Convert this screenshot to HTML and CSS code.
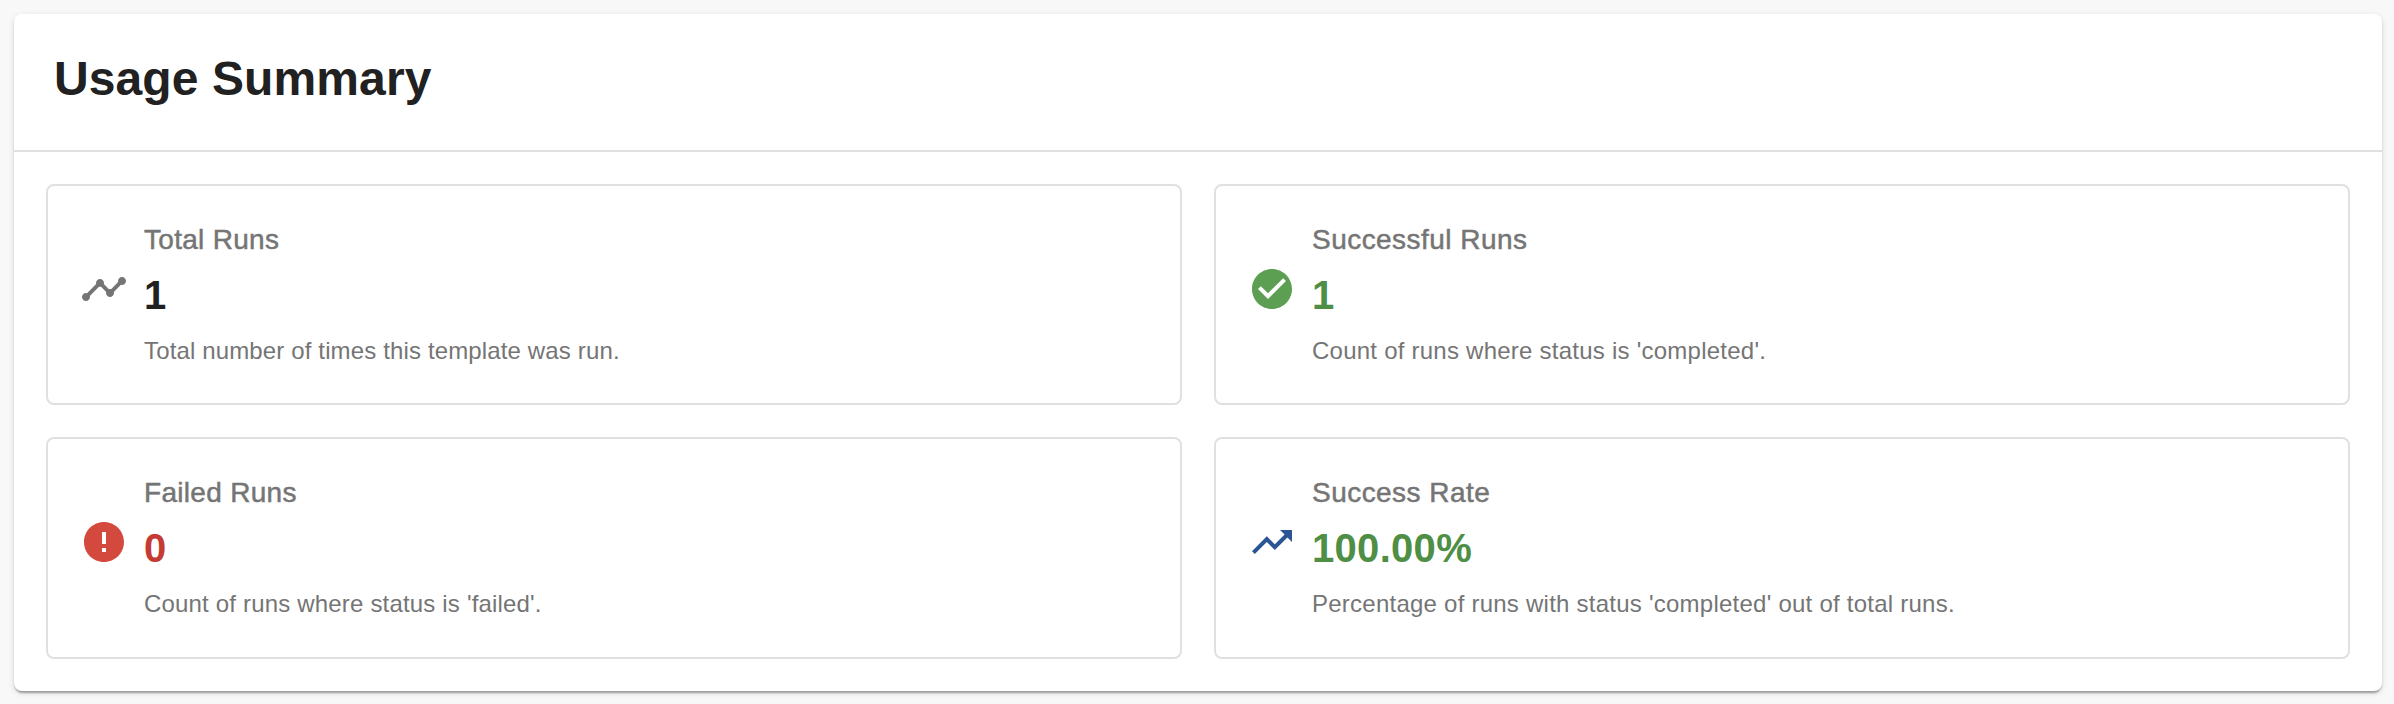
FILE: index.html
```html
<!DOCTYPE html>
<html lang="en">
<head>
<meta charset="utf-8">
<title>Usage Summary</title>
<link rel="stylesheet" href="styles.css">
</head>
<body>
<section class="panel">
  <header class="panel-header"><h1 class="panel-title">Usage Summary</h1></header>
  <div class="stats">
    <article class="stat stat-total">
      <svg class="icon icon-neutral" viewBox="0 0 24 24"><path d="M23 8c0 1.100-.9 2-2 2-.18 0-.35-.02-.51-.07l-3.560 3.550c.05.160.070.340.070.520 0 1.100-.9 2-2 2s-2-.9-2-2c0-.18.020-.36.070-.52l-2.550-2.550c-.16.050-.34.070-.52.070s-.36-.02-.52-.07l-4.550 4.560c.05.160.070.330.070.510 0 1.100-.9 2-2 2s-2-.9-2-2 .9-2 2-2c.18 0 .35.020.51.070l4.560-4.550C8.020 9.360 8 9.180 8 9c0-1.100.9-2 2-2s2 .9 2 2c0 .18-.02.360-.07.520l2.550 2.550c.16-.05.340-.07.520-.07s.36.020.52.070l3.550-3.560C19.020 8.350 19 8.180 19 8c0-1.100.9-2 2-2s2 .9 2 2z"/></svg>
      <div class="stat-body">
        <h2 class="stat-label">Total Runs</h2>
        <p class="stat-value">1</p>
        <p class="stat-note">Total number of times this template was run.</p>
      </div>
    </article>
    <article class="stat">
      <svg class="icon icon-success" viewBox="0 0 24 24"><path d="M12 2C6.480 2 2 6.480 2 12s4.480 10 10 10 10-4.480 10-10S17.520 2 12 2zm-2 15-5-5 1.410-1.410L10 14.170l7.590-7.590L19 8l-9 9z"/></svg>
      <div class="stat-body">
        <h2 class="stat-label">Successful Runs</h2>
        <p class="stat-value value-success">1</p>
        <p class="stat-note">Count of runs where status is 'completed'.</p>
      </div>
    </article>
    <article class="stat stat-failed">
      <svg class="icon icon-error" viewBox="0 0 24 24"><path d="M12 2C6.480 2 2 6.480 2 12s4.480 10 10 10 10-4.480 10-10S17.520 2 12 2zm1 15h-2v-2h2v2zm0-4h-2V7h2v6z"/></svg>
      <div class="stat-body">
        <h2 class="stat-label">Failed Runs</h2>
        <p class="stat-value value-error">0</p>
        <p class="stat-note">Count of runs where status is 'failed'.</p>
      </div>
    </article>
    <article class="stat">
      <svg class="icon icon-primary" viewBox="0 0 24 24"><path d="m16 6 2.290 2.290-4.880 4.880-4-4L2 16.590 3.410 18l6-6 4 4 6.300-6.290L22 12V6z"/></svg>
      <div class="stat-body">
        <h2 class="stat-label">Success Rate</h2>
        <p class="stat-value value-success">100.00%</p>
        <p class="stat-note">Percentage of runs with status 'completed' out of total runs.</p>
      </div>
    </article>
  </div>
</section>
</body>
</html>
```
FILE: styles.css
```css
* { box-sizing: border-box; }
html { height: 704px; overflow: hidden; }
body {
  margin: 0;
  padding: 14px 12px 13px 14px;
  height: 704px;
  background: #f8f8f8;
  color: #212121;
  font-family: "Liberation Sans", Arial, sans-serif;
  overflow: hidden;
}
h1, h2, p { margin: 0; font-weight: 400; white-space: nowrap; }
.panel {
  height: 677px;
  background: #fff;
  border-radius: 8px;
  box-shadow: 0 4px 2px -2px rgba(0,0,0,.2), 0 2px 2px 0 rgba(0,0,0,.14), 0 2px 6px 0 rgba(0,0,0,.12);
}
.panel-header {
  height: 138px;
  padding: 33px 40px 0;
  border-bottom: 2px solid #e0e0e0;
}
.panel-title { font-size: 48px; line-height: 64px; font-weight: 700; letter-spacing: .1px; }
.stats {
  display: grid;
  grid-template-columns: 1fr 1fr;
  grid-template-rows: 221px 222px;
  gap: 32px;
  padding: 32px;
}
.stat {
  display: flex;
  gap: 16px;
  padding: 32px;
  border: 2px solid #e0e0e0;
  border-radius: 8px;
}
.icon { flex: none; width: 48px; height: 48px; margin-top: 47px; }
.icon-neutral { fill: #757575; }
.icon-success { fill: #5c9f52; }
.icon-error { fill: #d3493e; }
.icon-primary { fill: #2c5594; }
.stat-label {
  font-size: 28px;
  line-height: 44px;
  letter-spacing: .46px;
  color: #757575;
  -webkit-text-stroke: .5px #757575;
}
.stat-value {
  margin-top: 1px;
  font-size: 40px;
  line-height: 64px;
  font-weight: 700;
  letter-spacing: .3px;
}
.value-success { color: #4e8f45; }
.value-error { color: #c53b33; }
.stat-note {
  margin-top: 4px;
  font-size: 24px;
  line-height: 40px;
  letter-spacing: .24px;
  color: #757575;
}
.stat-total .stat-label, .stat-failed .stat-label { letter-spacing: .3px; }
.stat-total .stat-note { letter-spacing: .14px; }
.stat-failed .stat-note { letter-spacing: .18px; }
```
